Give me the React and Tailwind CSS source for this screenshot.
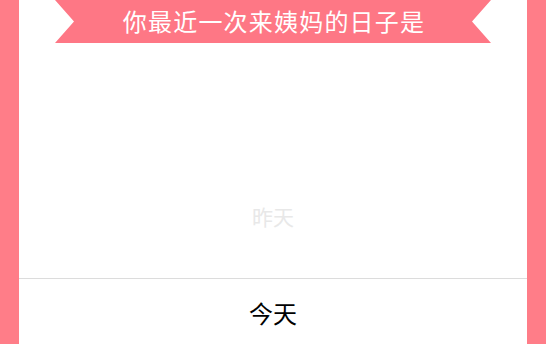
import React from 'react';

const App = () => {
  return (
    <div
      className="w-full h-[344px] bg-[#ff7d88] px-[19px] overflow-hidden"
      style={{ fontFamily: '"Noto Sans CJK SC", "Noto Sans", sans-serif' }}
    >
      <div className="h-full bg-white flex flex-col">
        {/* ribbon */}
        <div className="mx-[36px] h-[43px] bg-[#fe7785] flex items-center justify-center [clip-path:polygon(0_0,100%_0,calc(100%-19px)_50%,100%_100%,0_100%,19px_50%)]">
          <span className="text-white text-[24px] leading-none tracking-[1.2px] pl-[2px] -mt-[1px]">你最近一次来姨妈的日子是</span>
        </div>

        {/* picker */}
        <div className="h-[235px] flex flex-col justify-end pb-[41px]">
          <div className="h-[40px] flex items-center justify-center text-[21px] text-[#e8e8e8]">
            昨天
          </div>
        </div>
        <div className="border-t border-[#dcdcdc]" />
        <div className="flex-1 flex justify-center pt-[19px]">
          <span className="text-[24px] leading-[30px] text-black">今天</span>
        </div>
      </div>
    </div>
  );
};

export default App;
